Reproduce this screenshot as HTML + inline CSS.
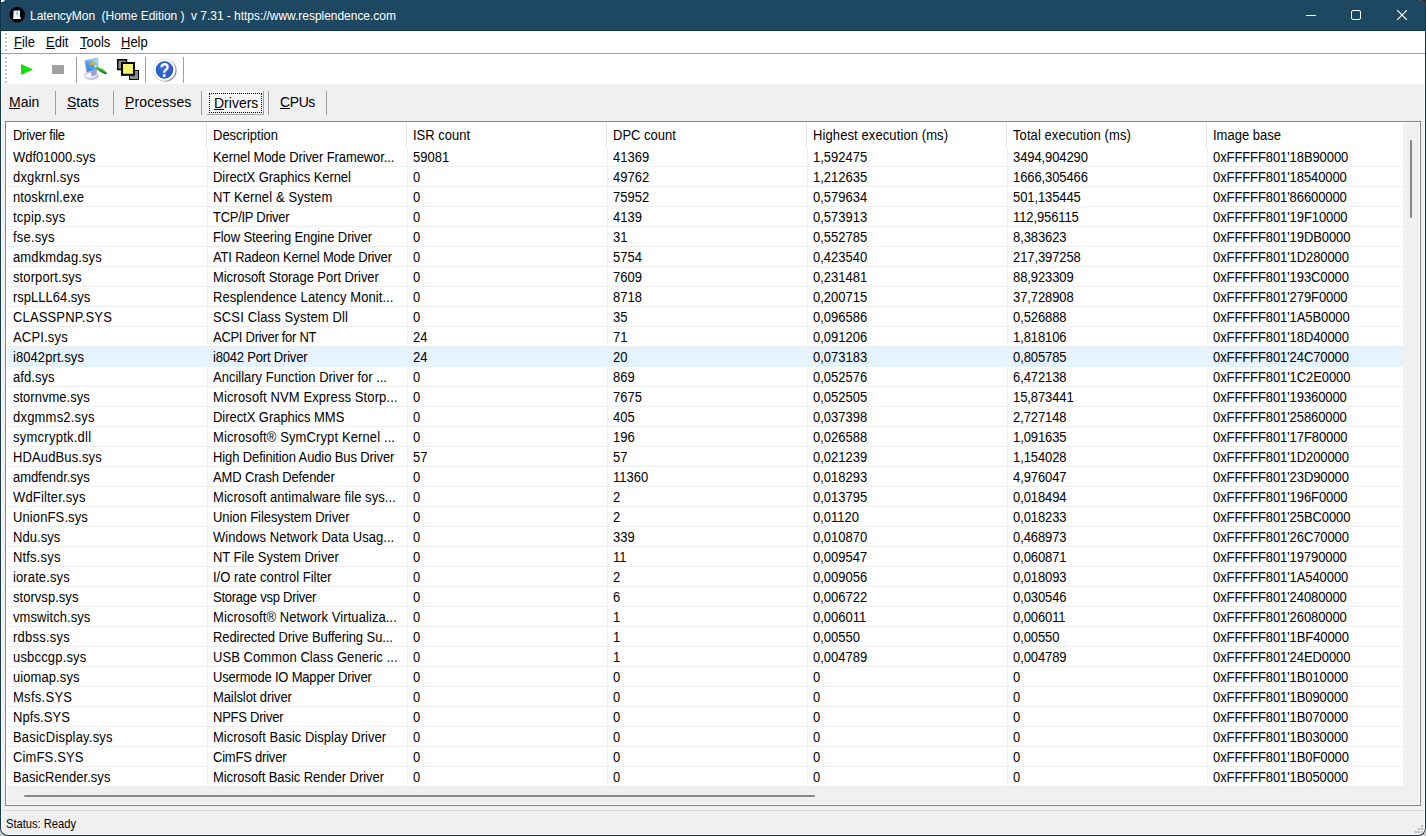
<!DOCTYPE html>
<html lang="en">
<head>
<meta charset="utf-8">
<title>LatencyMon</title>
<style>
*{box-sizing:border-box;margin:0;padding:0}
html,body{width:1426px;height:836px;overflow:hidden;background:#c9cccf}
body{font-family:"Liberation Sans",Arial,sans-serif;font-size:13px;color:#000;position:relative}
#win{position:absolute;left:0;top:0;width:1426px;height:836px;background:#f0f0f0;border-radius:0 8px 8px 8px;overflow:hidden}
#frame{position:absolute;left:0;top:0;width:1426px;height:836px;border:1px solid #15364b;border-top:none;border-radius:0 8px 8px 8px;pointer-events:none;z-index:50}
#inner{position:absolute;left:1px;top:84px;width:1424px;height:751px;border:1px solid #f7fcff;border-top:none;border-radius:0 0 7px 7px;pointer-events:none;z-index:49}
#trc{position:absolute;right:0;top:0;width:12px;height:12px;background:#2b2f34}
#title{position:absolute;left:0;top:0;width:1426px;height:31px;background:#1e4861;color:#fff;border-bottom:1px solid #17394f}
#title .txt{position:absolute;left:30px;top:9px;letter-spacing:-0.035px;font-size:12px;line-height:15px;white-space:pre;font-family:"Liberation Sans","DejaVu Sans",sans-serif}
#appico{position:absolute;left:9px;top:7px;width:16px;height:16px}
.capbtn{position:absolute;top:0;width:46px;height:31px}
#menubar{position:absolute;left:1px;top:31px;width:1424px;height:22px;background:#fff}
#menuline{position:absolute;left:1px;top:53px;width:1424px;height:1px;background:#a0a0a0}
#menubar span{position:absolute;top:3px;font-size:13px;line-height:16px;white-space:pre;transform:scaleY(1.08);transform-origin:0 0}
#menubar i,.tab i{position:absolute;height:1px;background:#000;top:17px}
#toolbar{position:absolute;left:1px;top:54px;width:1424px;height:30px;background:#fff}
.grip{position:absolute;left:4px;width:2px;background-image:linear-gradient(#c2c2c2 50%,transparent 50%);background-size:2px 4px}
.tsep{position:absolute;top:3px;width:1px;height:26px;background:#a0a0a0}
.tab{position:absolute;top:91px;height:24px;font-size:14px;line-height:16px;white-space:pre}
.tab span{position:absolute;top:3px}
.tabsep{position:absolute;top:91px;width:1px;height:24px;background:#a0a0a0}
#list{position:absolute;left:5px;top:121px;width:1416px;height:685px;border:1px solid #848586;background:#fff;overflow:hidden}
#hdr{position:absolute;left:1px;top:1px;height:24px;width:1396px;background:#fff}
#hdr span{position:absolute;top:4px;line-height:16px;white-space:pre;transform:scaleY(1.08);transform-origin:0 0}
#hdr i{position:absolute;top:0;width:1px;height:24px;background:#e5e5e5}
#rows{position:absolute;left:1px;top:25px;width:1396px;height:640px;background-image:linear-gradient(to bottom,transparent 19px,#f0f0f0 19px);background-size:100% 20px}
.r{position:relative;height:20px;width:1396px}
.r.hl{background:#e5f3ff;z-index:2}
.c{position:absolute;top:2px;line-height:16px;white-space:pre;transform:scaleY(1.08);transform-origin:0 0}
.c0{left:6px}.c1{left:206px}.c2{left:406px}.c3{left:606px}.c4{left:806px}.c5{left:1006px;letter-spacing:-0.1px}.c6{left:1206px;letter-spacing:-0.09px}
.vl{position:absolute;top:25px;width:1px;height:640px;background:#f0f0f0}
#vscroll{position:absolute;left:1397px;top:1px;width:16px;height:681px;background:#f0f0f0}
#vthumb{position:absolute;left:7px;top:17px;width:2px;height:78px;background:#868686;border-radius:1px}
#hscroll{position:absolute;left:1px;top:665px;width:1412px;height:17px;background:#f0f0f0}
#hthumb{position:absolute;left:17px;top:8px;width:791px;height:2px;background:#868686;border-radius:1px}
#statusline{position:absolute;left:1px;top:810px;width:1424px;height:1px;background:#d7d7d7}
#status{position:absolute;left:6px;top:817px;font-size:12px;line-height:15px;white-space:pre;transform:scaleX(.928);transform-origin:0 0}
</style>
</head>
<body>
<div id="trc"></div>
<div id="win">
<div id="title">
<div style="position:absolute;left:-5px;top:-6px;width:10px;height:8px;border:2px solid #fff;border-radius:3px;background:#3a3226"></div><div style="position:absolute;left:0;top:4px;width:1px;height:2px;background:#7fb0d4"></div>
<svg id="appico" viewBox="0 0 16 16"><circle cx="8.200" cy="7.700" r="7.700" fill="#000"/><path d="M4.600 3.400h6.400v7.200h.8v1.200H4.200z" fill="#e6f1fa"/><path d="M7 4.800h2v3.600l-1.400-1.200z" fill="#9db7c6"/><path d="M4.300 10.600h7.400v1.200H4.300z" fill="#fafcfd"/></svg>
<div class="txt">LatencyMon  (Home Edition )  v 7.31 - https://www.resplendence.com</div>
<svg class="capbtn" style="left:1288px" viewBox="0 0 46 31"><path d="M18 15.5h10" stroke="#fff" stroke-width="1" fill="none"/></svg>
<svg class="capbtn" style="left:1334px" viewBox="0 0 46 31"><rect x="17.500" y="10.500" width="9" height="9" rx="1.500" stroke="#fff" stroke-width="1" fill="none"/></svg>
<svg class="capbtn" style="left:1380px" viewBox="0 0 46 31"><path d="M17.500 10.500l9 9M26.500 10.500l-9 9" stroke="#fff" stroke-width="1.100" stroke-linecap="square" fill="none"/></svg>
</div>
<div id="menubar">
<div class="grip" style="top:2px;height:18px"></div>
<span style="left:13px">File</span><span style="left:45px">Edit</span><span style="left:79px">Tools</span><span style="left:120px">Help</span>
<i style="left:13px;width:8px"></i><i style="left:45px;width:9px"></i><i style="left:79px;width:6px"></i><i style="left:120px;width:9px"></i>
</div>
<div id="menuline"></div>
<div id="toolbar">
<div class="grip" style="top:3px;height:26px"></div>
<svg style="position:absolute;left:14px;top:3px" width="180" height="26" viewBox="15 57 180 26">
<defs>
<linearGradient id="scr" x1="1" y1="0" x2="0.1" y2="1"><stop offset="0" stop-color="#d4f2fd"/><stop offset=".35" stop-color="#6cc6f5"/><stop offset=".7" stop-color="#3a96ea"/><stop offset="1" stop-color="#4a78dc"/></linearGradient>
<radialGradient id="bas" cx=".3" cy=".3" r=".9"><stop offset="0" stop-color="#ffffff"/><stop offset=".55" stop-color="#e4e4f6"/><stop offset="1" stop-color="#a4a4d6"/></radialGradient>
<linearGradient id="pen" x1="0" y1="0" x2=".4" y2="1"><stop offset="0" stop-color="#58c048"/><stop offset=".5" stop-color="#2fa32a"/><stop offset="1" stop-color="#1c7a1c"/></linearGradient>
<radialGradient id="hlp" cx=".45" cy=".35" r=".75"><stop offset="0" stop-color="#3a6ed8"/><stop offset="1" stop-color="#2554bc"/></radialGradient>
<pattern id="dith" x="122" y="64" width="3" height="3" patternUnits="userSpaceOnUse"><rect width="3" height="3" fill="#f6fa78"/><rect x="1" y="1" width="1.500" height="1.500" fill="#ecec3c"/></pattern>
</defs>
<path d="M21 64v11l12-5.500z" fill="#10e010"/>
<rect x="52" y="65" width="12" height="9" fill="#a0a0a0"/>
<g>
<ellipse cx="91.300" cy="75.900" rx="7" ry="3.500" fill="url(#bas)" stroke="#a6a6cc" stroke-width=".7"/>
<path d="M91.200 70.500L97 68.800L96.600 73.500Q95 76.400 91.500 76z" fill="#8c8ce2" opacity=".85"/>
<path d="M85 60.700L97.700 58.100L97.900 69.400L86.700 72.300z" fill="url(#scr)" stroke="#a2acdc" stroke-width=".9" stroke-linejoin="round"/>
<path d="M92.500 65.200L96.800 68L96.800 66.400L94.600 64.600z" fill="#ffffff"/>
<ellipse cx="92.200" cy="63.700" rx="2.500" ry="1.600" fill="#e6b62c" stroke="#b88a18" stroke-width=".4" transform="rotate(-18 92.200 63.700)"/>
<path d="M92 65.600Q93 66.300 94.600 65.600" stroke="#1c3c78" stroke-width=".8" fill="none"/>
<path d="M95.600 66.700Q98.600 66.300 102.800 69.300Q106.800 72.200 106.900 73.500Q106.600 74.800 104.800 74.100Q99.500 72 95.700 68.500z" fill="url(#pen)"/>
<path d="M97.200 67.300Q100.500 68 104.800 71.800" stroke="#7fd86c" stroke-width=".7" fill="none" stroke-linecap="round"/>
</g>
<g>
<rect x="117.750" y="59.750" width="8.750" height="9.750" fill="#8c8c8c" stroke="#000" stroke-width="1.500"/>
<rect x="129.500" y="70.500" width="9" height="9" fill="#8c8c8c" stroke="#000" stroke-width="1"/>
<rect x="122" y="63" width="12" height="11.800" fill="url(#dith)" stroke="#000" stroke-width="2"/>
</g>
<g>
<circle cx="165.500" cy="70.500" r="11" fill="#4a4a4a" opacity=".85"/>
<circle cx="164.500" cy="69.900" r="11.100" fill="#ffffff" stroke="#c6cad0" stroke-width=".5"/>
<circle cx="164.500" cy="69.900" r="8.800" fill="url(#hlp)"/>
<text transform="translate(164.400 77.100) scale(.85 1.07)" x="0" y="0" text-anchor="middle" font-family="Liberation Sans,Arial,sans-serif" font-weight="bold" font-size="19" fill="#ffffff">?</text>
</g>
</svg>
<div class="tsep" style="left:75px"></div><div class="tsep" style="left:144px"></div><div class="tsep" style="left:182px"></div>
</div>
<div class="tab" style="left:9px"><span>Main</span><i style="left:0;width:11px"></i></div>
<div class="tab" style="left:67px"><span>Stats</span><i style="left:0;width:9px"></i></div>
<div class="tab" style="left:125px"><span style="letter-spacing:.12px">Processes</span><i style="left:0;width:9px"></i></div>
<div class="tab" id="drv" style="left:207px;width:57px;background:#f8f8f8;border-right:1px solid #a0a0a0;border-bottom:1px solid #a0a0a0"><div style="position:absolute;left:2px;top:2px;width:53px;height:20px;border:1px dotted #000"></div><span style="left:7px;top:4px">Drivers</span><i style="left:7px;top:18px;width:10px"></i></div>
<div class="tab" style="left:280px"><span style="letter-spacing:-.4px">CPUs</span><i style="left:0;width:10px"></i></div>
<div class="tabsep" style="left:55px"></div><div class="tabsep" style="left:113px"></div><div class="tabsep" style="left:201px"></div><div class="tabsep" style="left:268px"></div><div class="tabsep" style="left:326px"></div>
<div id="list">
<div id="hdr">
<span style="left:6px;letter-spacing:-0.28px">Driver file</span><span style="left:206px">Description</span><span style="left:406px">ISR count</span><span style="left:606px">DPC count</span><span style="left:806px;letter-spacing:.1px">Highest execution (ms)</span><span style="left:1006px;letter-spacing:.08px">Total execution (ms)</span><span style="left:1206px">Image base</span>
<i style="left:199px"></i><i style="left:399px"></i><i style="left:599px"></i><i style="left:799px"></i><i style="left:999px"></i><i style="left:1199px"></i>
</div>
<div id="rows">
<div class="r"><span class="c c0" style="letter-spacing:0.002px">Wdf01000.sys</span><span class="c c1" style="letter-spacing:-0.099px">Kernel Mode Driver Framewor...</span><span class="c c2">59081</span><span class="c c3">41369</span><span class="c c4">1,592475</span><span class="c c5">3494,904290</span><span class="c c6">0xFFFFF801'18B90000</span></div>
<div class="r"><span class="c c0" style="letter-spacing:0.162px">dxgkrnl.sys</span><span class="c c1" style="letter-spacing:-0.069px">DirectX Graphics Kernel</span><span class="c c2">0</span><span class="c c3">49762</span><span class="c c4">1,212635</span><span class="c c5">1666,305466</span><span class="c c6">0xFFFFF801'18540000</span></div>
<div class="r"><span class="c c0" style="letter-spacing:0.077px">ntoskrnl.exe</span><span class="c c1" style="letter-spacing:0.101px">NT Kernel &amp; System</span><span class="c c2">0</span><span class="c c3">75952</span><span class="c c4">0,579634</span><span class="c c5">501,135445</span><span class="c c6">0xFFFFF801'86600000</span></div>
<div class="r"><span class="c c0" style="letter-spacing:0.221px">tcpip.sys</span><span class="c c1" style="letter-spacing:-0.279px">TCP/IP Driver</span><span class="c c2">0</span><span class="c c3">4139</span><span class="c c4">0,573913</span><span class="c c5">112,956115</span><span class="c c6">0xFFFFF801'19F10000</span></div>
<div class="r"><span class="c c0" style="letter-spacing:0.178px">fse.sys</span><span class="c c1" style="letter-spacing:-0.111px">Flow Steering Engine Driver</span><span class="c c2">0</span><span class="c c3">31</span><span class="c c4">0,552785</span><span class="c c5">8,383623</span><span class="c c6">0xFFFFF801'19DB0000</span></div>
<div class="r"><span class="c c0" style="letter-spacing:0.120px">amdkmdag.sys</span><span class="c c1" style="letter-spacing:-0.180px">ATI Radeon Kernel Mode Driver</span><span class="c c2">0</span><span class="c c3">5754</span><span class="c c4">0,423540</span><span class="c c5">217,397258</span><span class="c c6">0xFFFFF801'1D280000</span></div>
<div class="r"><span class="c c0" style="letter-spacing:0.109px">storport.sys</span><span class="c c1" style="letter-spacing:-0.062px">Microsoft Storage Port Driver</span><span class="c c2">0</span><span class="c c3">7609</span><span class="c c4">0,231481</span><span class="c c5">88,923309</span><span class="c c6">0xFFFFF801'193C0000</span></div>
<div class="r"><span class="c c0" style="letter-spacing:0.002px">rspLLL64.sys</span><span class="c c1" style="letter-spacing:0.066px">Resplendence Latency Monit...</span><span class="c c2">0</span><span class="c c3">8718</span><span class="c c4">0,200715</span><span class="c c5">37,728908</span><span class="c c6">0xFFFFF801'279F0000</span></div>
<div class="r"><span class="c c0" style="letter-spacing:0.140px">CLASSPNP.SYS</span><span class="c c1" style="letter-spacing:0.135px">SCSI Class System Dll</span><span class="c c2">0</span><span class="c c3">35</span><span class="c c4">0,096586</span><span class="c c5">0,526888</span><span class="c c6">0xFFFFF801'1A5B0000</span></div>
<div class="r"><span class="c c0" style="letter-spacing:0.171px">ACPI.sys</span><span class="c c1" style="letter-spacing:-0.286px">ACPI Driver for NT</span><span class="c c2">24</span><span class="c c3">71</span><span class="c c4">0,091206</span><span class="c c5">1,818106</span><span class="c c6">0xFFFFF801'18D40000</span></div>
<div class="r hl"><span class="c c0" style="letter-spacing:0.074px">i8042prt.sys</span><span class="c c1" style="letter-spacing:-0.189px">i8042 Port Driver</span><span class="c c2">24</span><span class="c c3">20</span><span class="c c4">0,073183</span><span class="c c5">0,805785</span><span class="c c6">0xFFFFF801'24C70000</span></div>
<div class="r"><span class="c c0" style="letter-spacing:0.053px">afd.sys</span><span class="c c1" style="letter-spacing:-0.004px">Ancillary Function Driver for ...</span><span class="c c2">0</span><span class="c c3">869</span><span class="c c4">0,052576</span><span class="c c5">6,472138</span><span class="c c6">0xFFFFF801'1C2E0000</span></div>
<div class="r"><span class="c c0" style="letter-spacing:0.006px">stornvme.sys</span><span class="c c1" style="letter-spacing:0.110px">Microsoft NVM Express Storp...</span><span class="c c2">0</span><span class="c c3">7675</span><span class="c c4">0,052505</span><span class="c c5">15,873441</span><span class="c c6">0xFFFFF801'19360000</span></div>
<div class="r"><span class="c c0" style="letter-spacing:0.207px">dxgmms2.sys</span><span class="c c1" style="letter-spacing:-0.046px">DirectX Graphics MMS</span><span class="c c2">0</span><span class="c c3">405</span><span class="c c4">0,037398</span><span class="c c5">2,727148</span><span class="c c6">0xFFFFF801'25860000</span></div>
<div class="r"><span class="c c0" style="letter-spacing:0.250px">symcryptk.dll</span><span class="c c1" style="letter-spacing:0.116px">Microsoft® SymCrypt Kernel ...</span><span class="c c2">0</span><span class="c c3">196</span><span class="c c4">0,026588</span><span class="c c5">1,091635</span><span class="c c6">0xFFFFF801'17F80000</span></div>
<div class="r"><span class="c c0" style="letter-spacing:0.120px">HDAudBus.sys</span><span class="c c1" style="letter-spacing:-0.116px">High Definition Audio Bus Driver</span><span class="c c2">57</span><span class="c c3">57</span><span class="c c4">0,021239</span><span class="c c5">1,154028</span><span class="c c6">0xFFFFF801'1D200000</span></div>
<div class="r"><span class="c c0" style="letter-spacing:-0.062px">amdfendr.sys</span><span class="c c1" style="letter-spacing:-0.150px">AMD Crash Defender</span><span class="c c2">0</span><span class="c c3">11360</span><span class="c c4">0,018293</span><span class="c c5">4,976047</span><span class="c c6">0xFFFFF801'23D90000</span></div>
<div class="r"><span class="c c0" style="letter-spacing:0.156px">WdFilter.sys</span><span class="c c1" style="letter-spacing:0.068px">Microsoft antimalware file sys...</span><span class="c c2">0</span><span class="c c3">2</span><span class="c c4">0,013795</span><span class="c c5">0,018494</span><span class="c c6">0xFFFFF801'196F0000</span></div>
<div class="r"><span class="c c0" style="letter-spacing:0.114px">UnionFS.sys</span><span class="c c1" style="letter-spacing:-0.064px">Union Filesystem Driver</span><span class="c c2">0</span><span class="c c3">2</span><span class="c c4">0,01120</span><span class="c c5">0,018233</span><span class="c c6">0xFFFFF801'25BC0000</span></div>
<div class="r"><span class="c c0" style="letter-spacing:0.062px">Ndu.sys</span><span class="c c1" style="letter-spacing:0.049px">Windows Network Data Usag...</span><span class="c c2">0</span><span class="c c3">339</span><span class="c c4">0,010870</span><span class="c c5">0,468973</span><span class="c c6">0xFFFFF801'26C70000</span></div>
<div class="r"><span class="c c0" style="letter-spacing:0.171px">Ntfs.sys</span><span class="c c1" style="letter-spacing:-0.052px">NT File System Driver</span><span class="c c2">0</span><span class="c c3">11</span><span class="c c4">0,009547</span><span class="c c5">0,060871</span><span class="c c6">0xFFFFF801'19790000</span></div>
<div class="r"><span class="c c0" style="letter-spacing:0.113px">iorate.sys</span><span class="c c1" style="letter-spacing:0.008px">I/O rate control Filter</span><span class="c c2">0</span><span class="c c3">2</span><span class="c c4">0,009056</span><span class="c c5">0,018093</span><span class="c c6">0xFFFFF801'1A540000</span></div>
<div class="r"><span class="c c0" style="letter-spacing:0.037px">storvsp.sys</span><span class="c c1" style="letter-spacing:-0.249px">Storage vsp Driver</span><span class="c c2">0</span><span class="c c3">6</span><span class="c c4">0,006722</span><span class="c c5">0,030546</span><span class="c c6">0xFFFFF801'24080000</span></div>
<div class="r"><span class="c c0" style="letter-spacing:0.070px">vmswitch.sys</span><span class="c c1" style="letter-spacing:0.081px">Microsoft® Network Virtualiza...</span><span class="c c2">0</span><span class="c c3">1</span><span class="c c4">0,006011</span><span class="c c5">0,006011</span><span class="c c6">0xFFFFF801'26080000</span></div>
<div class="r"><span class="c c0" style="letter-spacing:0.225px">rdbss.sys</span><span class="c c1" style="letter-spacing:-0.085px">Redirected Drive Buffering Su...</span><span class="c c2">0</span><span class="c c3">1</span><span class="c c4">0,00550</span><span class="c c5">0,00550</span><span class="c c6">0xFFFFF801'1BF40000</span></div>
<div class="r"><span class="c c0" style="letter-spacing:0.177px">usbccgp.sys</span><span class="c c1" style="letter-spacing:0.066px">USB Common Class Generic ...</span><span class="c c2">0</span><span class="c c3">1</span><span class="c c4">0,004789</span><span class="c c5">0,004789</span><span class="c c6">0xFFFFF801'24ED0000</span></div>
<div class="r"><span class="c c0" style="letter-spacing:0.080px">uiomap.sys</span><span class="c c1" style="letter-spacing:-0.186px">Usermode IO Mapper Driver</span><span class="c c2">0</span><span class="c c3">0</span><span class="c c4">0</span><span class="c c5">0</span><span class="c c6">0xFFFFF801'1B010000</span></div>
<div class="r"><span class="c c0" style="letter-spacing:0.280px">Msfs.SYS</span><span class="c c1" style="letter-spacing:-0.096px">Mailslot driver</span><span class="c c2">0</span><span class="c c3">0</span><span class="c c4">0</span><span class="c c5">0</span><span class="c c6">0xFFFFF801'1B090000</span></div>
<div class="r"><span class="c c0" style="letter-spacing:0.090px">Npfs.SYS</span><span class="c c1" style="letter-spacing:-0.235px">NPFS Driver</span><span class="c c2">0</span><span class="c c3">0</span><span class="c c4">0</span><span class="c c5">0</span><span class="c c6">0xFFFFF801'1B070000</span></div>
<div class="r"><span class="c c0" style="letter-spacing:0.201px">BasicDisplay.sys</span><span class="c c1" style="letter-spacing:0.012px">Microsoft Basic Display Driver</span><span class="c c2">0</span><span class="c c3">0</span><span class="c c4">0</span><span class="c c5">0</span><span class="c c6">0xFFFFF801'1B030000</span></div>
<div class="r"><span class="c c0" style="letter-spacing:0.142px">CimFS.SYS</span><span class="c c1" style="letter-spacing:-0.213px">CimFS driver</span><span class="c c2">0</span><span class="c c3">0</span><span class="c c4">0</span><span class="c c5">0</span><span class="c c6">0xFFFFF801'1B0F0000</span></div>
<div class="r"><span class="c c0" style="letter-spacing:0.042px">BasicRender.sys</span><span class="c c1" style="letter-spacing:-0.060px">Microsoft Basic Render Driver</span><span class="c c2">0</span><span class="c c3">0</span><span class="c c4">0</span><span class="c c5">0</span><span class="c c6">0xFFFFF801'1B050000</span></div></div>
<div class="vl" style="left:201px"></div><div class="vl" style="left:401px"></div><div class="vl" style="left:601px"></div><div class="vl" style="left:801px"></div><div class="vl" style="left:1001px"></div><div class="vl" style="left:1201px"></div>
<div id="vscroll"><div id="vthumb"></div></div>
<div id="hscroll"><div id="hthumb"></div></div>
</div>
<div id="statusline"></div>
<div id="status">Status: Ready</div>
<svg style="position:absolute;left:1415px;top:825px" width="8" height="8" viewBox="0 0 8 8"><g fill="#b9b9b9"><rect x="6" y="0" width="2" height="2"/><rect x="3" y="3" width="2" height="2"/><rect x="6" y="3" width="2" height="2"/><rect x="0" y="6" width="2" height="2"/><rect x="3" y="6" width="2" height="2"/><rect x="6" y="6" width="2" height="2"/></g></svg>
</div>
<div id="inner"></div>
<div id="frame"></div>
</body>
</html>
